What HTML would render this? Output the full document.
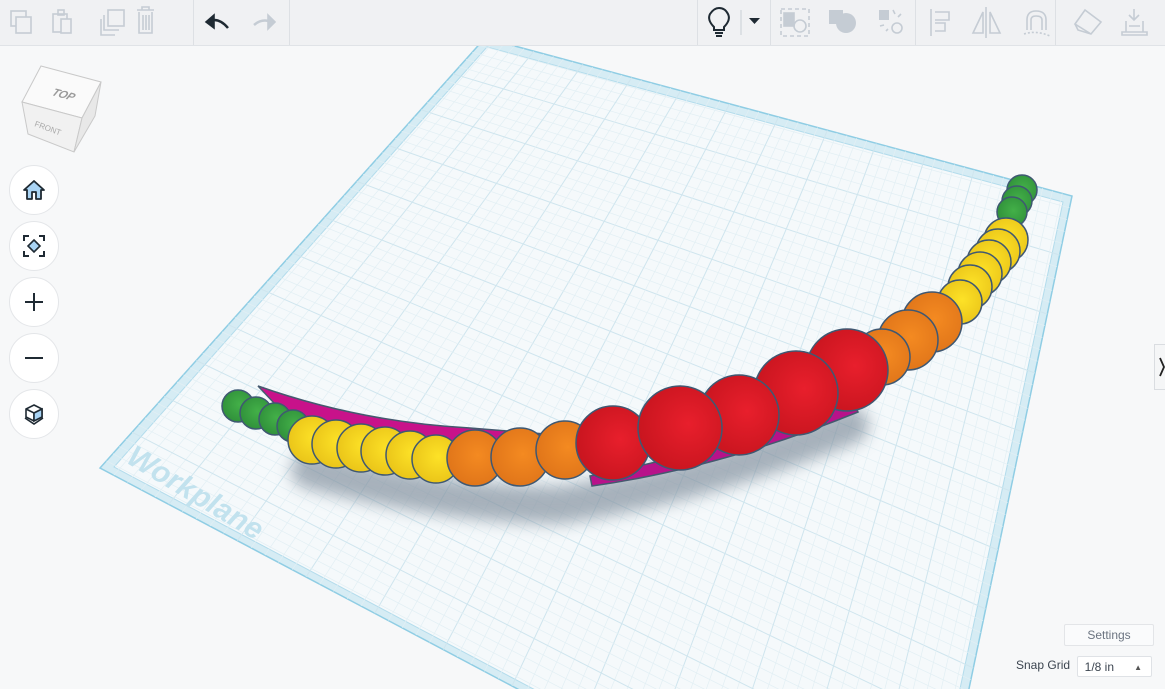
<!DOCTYPE html>
<html><head><meta charset="utf-8">
<style>
html,body{margin:0;padding:0;width:1165px;height:689px;overflow:hidden;background:#f7f8f9;font-family:"Liberation Sans",sans-serif;position:relative}
#tb{position:absolute;left:0;top:0;width:1165px;height:45px;background:#f0f1f3;border-bottom:1px solid #e0e3e7;z-index:5}
.sep{position:absolute;top:0;width:1px;height:45px;background:#dde0e4}
.vb{position:absolute;left:9px;width:48px;height:48px;border-radius:50%;background:#fff;border:1px solid #e4e6e9;z-index:4}
.vb svg{position:absolute;left:12px;top:12px}
#set{position:absolute;left:1064px;top:624px;width:88px;height:20px;border:1px solid #e3e5e8;background:#fafbfc;color:#6b7480;font-size:12px;text-align:center;line-height:20px;border-radius:2px}
#sg{position:absolute;left:1016px;top:658px;font-size:12px;color:#3c4550}
#sel{position:absolute;left:1077px;top:656px;width:75px;height:21px;border:1px solid #dfe2e6;background:#fff;font-size:12px;color:#3c4550;line-height:21px;border-radius:2px;box-sizing:border-box}
</style></head><body>
<svg id="scene" width="1165" height="689" style="position:absolute;left:0;top:0">
<defs>
<filter id="bl" x="-20%" y="-50%" width="140%" height="200%"><feGaussianBlur stdDeviation="8"/></filter>
<radialGradient id="gG" cx="55%" cy="45%" r="60%"><stop offset="0" stop-color="#43b048"/><stop offset="1" stop-color="#2f8f3a"/></radialGradient>
<radialGradient id="gY" cx="55%" cy="45%" r="60%"><stop offset="0" stop-color="#fde227"/><stop offset="1" stop-color="#e9c318"/></radialGradient>
<radialGradient id="gO" cx="55%" cy="45%" r="60%"><stop offset="0" stop-color="#f48a21"/><stop offset="1" stop-color="#df7419"/></radialGradient>
<radialGradient id="gR" cx="60%" cy="45%" r="60%"><stop offset="0" stop-color="#e81f2c"/><stop offset="1" stop-color="#c9151f"/></radialGradient>
<clipPath id="wp"><polygon points="485,38 1072,196 924,904 100,468"/></clipPath>
</defs>
<polygon points="485,38 1072,196 924,904 100,468" fill="#d6ecf4" stroke="#8fcde4" stroke-width="1.5"/>
<polygon points="487,47 1063,202 917,892 114,467" fill="#f5f9fb" stroke="#b3dcec" stroke-width="1"/>
<g id="grid" clip-path="url(#wp)"></g>
<text x="0" y="0" transform="translate(125,462) rotate(31)" font-size="30" font-weight="bold" font-style="italic" fill="#c2e2ee" font-family="Liberation Sans,sans-serif">Workplane</text>
<path d="M310,470 Q450,505 560,505 Q700,485 850,425" stroke="#8593a0" stroke-width="38" fill="none" opacity="0.7" filter="url(#bl)" stroke-linecap="round"/>
<path d="M258,386 Q360,422 470,428 L570,436 L570,455 Q400,452 290,420 Z" fill="#c8128a" stroke="#45596f" stroke-width="1.5"/>
<path d="M590,476 Q720,452 852,400 L858,412 Q720,468 592,486 Z" fill="#b8128a" stroke="#45596f" stroke-width="1.5"/>
<g id="beads" stroke="#3f5872" stroke-width="1.5"></g>
<g>
<polygon points="41,66 101,82 82,118 22,102" fill="#fafafa" stroke="#c9c9c9"/>
<polygon points="22,102 82,118 74,152 28,134" fill="#f1f1f1" stroke="#c9c9c9"/>
<polygon points="82,118 101,82 95,116 74,152" fill="#e8e8e8" stroke="#c9c9c9"/>
<text transform="translate(51,95) rotate(15) skewX(-15)" font-size="11" font-weight="bold" font-style="italic" fill="#9a9a9a">TOP</text>
<text transform="translate(34,126) rotate(20)" font-size="8" fill="#a8a8a8">FRONT</text>
</g>
<rect x="1154.5" y="344.5" width="12" height="45" fill="#f5f6f7" stroke="#dadde1"/>
<path d="M1160,358 L1164,367 L1160,376" stroke="#222" stroke-width="1.8" fill="none"/>
</svg>

<div id="tb">
<div class="sep" style="left:193px"></div><div class="sep" style="left:289px"></div>
<div class="sep" style="left:697px"></div><div class="sep" style="left:770px"></div>
<div class="sep" style="left:915px"></div><div class="sep" style="left:1055px"></div>
<svg width="1165" height="45" style="position:absolute;left:0;top:0" fill="none" stroke="#c5ccd4" stroke-width="1.6">
<rect x="11" y="11" width="15" height="15"/><rect x="16" y="17" width="15" height="16" fill="#f0f1f3"/>
<rect x="53" y="14" width="14" height="18"/><rect x="58" y="10" width="6" height="5"/><rect x="61" y="19" width="10" height="14" fill="#f0f1f3"/>
<rect x="108" y="10" width="16" height="16"/><path d="M104,15 V30 H119 M101,19 V35 H115"/>
<path d="M137,10 H154 M142,10 V7 H149 V10 M139,12 V33 H152 V12 M143,15 V30 M146,15 V30 M149,15 V30"/>
<path d="M207,22 Q218,16 228,28" stroke="#1f2a33" stroke-width="2.5"/><path d="M206,22 L214,15 L214,28 Z" fill="#1f2a33" stroke="#1f2a33"/>
<path d="M254,25 Q262,18 272,22" stroke-width="2.5"/><path d="M275,22 L268,15 L268,29 Z" fill="#c5ccd4"/>
<g stroke="#1f2a33" stroke-width="2"><path d="M714,27 Q707,20 710,14 Q714,8 719,8 Q725,8 728,14 Q731,20 724,27 V30 H714 Z"/><path d="M715,33 H723 M716,36 H722"/></g>
<path d="M741,10 V35" stroke="#c9ced4" stroke-width="1"/>
<path d="M749,18 H760 L754.5,24 Z" fill="#1f2a33" stroke="none"/>
<rect x="781" y="9" width="28" height="27" stroke-dasharray="4 3"/><rect x="784" y="13" width="10" height="13" fill="#c5ccd4"/><circle cx="800" cy="26" r="6"/>
<rect x="829" y="10" width="14" height="14" fill="#c5ccd4" stroke="none"/><circle cx="846" cy="23" r="10" fill="#c5ccd4" stroke="none"/>
<rect x="879" y="10" width="10" height="10" fill="#c5ccd4" stroke="none"/><circle cx="897" cy="28" r="5"/><path d="M893,10 L895,14 M901,14 L898,17 M880,26 L884,25 M886,31 L888,29"/>
<path d="M931,9 V36 M935,12 H949 V20 H935 M935,23 H945 V31 H935"/>
<path d="M986,7 V38 M983,12 L973,33 H983 Z M990,12 L1000,33 H990 Z"/>
<path d="M1024,34 Q1036,30 1050,36" stroke-dasharray="2 2"/><path d="M1027,30 V20 Q1027,11 1036,11 Q1046,11 1046,20 V30 M1031,30 V20 Q1031,16 1036,16 Q1042,16 1042,20 V30"/>
<path d="M1075,24 L1085,10 L1101,22 L1091,34 Z M1075,24 L1078,30 L1091,34"/>
<path d="M1134,9 V20 M1129,15 L1134,20 L1139,15 M1126,21 V32 H1143 V21 M1122,32 H1147 V35 H1122 Z M1129,26 H1140"/>
</svg>
</div>

<div class="vb" style="top:165px"><svg width="24" height="24"><path d="M2,12 L12,3 L22,12 H19 V21 H14 V14 H10 V21 H5 V12 Z" fill="#a9d4f5" stroke="#1f2a33" stroke-width="1.8" stroke-linejoin="round"/></svg></div>
<div class="vb" style="top:221px"><svg width="24" height="24" fill="none" stroke="#1f2a33" stroke-width="2"><path d="M2,7 V2 H7 M17,2 H22 V7 M22,17 V22 H17 M7,22 H2 V17"/><path d="M12,6 L18,12 L12,18 L6,12 Z" fill="#a9d4f5" stroke-width="1.6"/></svg></div>
<div class="vb" style="top:277px"><svg width="24" height="24" stroke="#1f2a33" stroke-width="2"><path d="M12,3 V21 M3,12 H21"/></svg></div>
<div class="vb" style="top:333px"><svg width="24" height="24" stroke="#1f2a33" stroke-width="2"><path d="M3,12 H21"/></svg></div>
<div class="vb" style="top:389px"><svg width="24" height="24" fill="none" stroke="#1f2a33" stroke-width="1.6"><path d="M12,3 L20,7 L20,15 L12,19 L4,15 L4,7 Z M4,7 L12,11 L20,7 M12,11 V19"/><path d="M12,11 L20,7 V15 L12,19 Z" fill="#a9d4f5"/><path d="M3,16 L12,22 L21,16"/></svg></div>

<div id="set">Settings</div>
<div id="sg">Snap Grid</div>
<div id="sel">&nbsp;&nbsp;1/8 in<span style="position:absolute;right:9px;top:0;font-size:8px;color:#555">▲</span></div>

<script>
(function(){
var A=[485,38],B=[1072,196],C=[924,904],D=[100,468];
function P(u,v){return [(1-u)*(1-v)*A[0]+u*(1-v)*B[0]+u*v*C[0]+(1-u)*v*D[0],(1-u)*(1-v)*A[1]+u*(1-v)*B[1]+u*v*C[1]+(1-u)*v*D[1]];}
var g=document.getElementById('grid'),s='';var N=60;
function ln(p,q,c,w){return '<line x1="'+p[0].toFixed(1)+'" y1="'+p[1].toFixed(1)+'" x2="'+q[0].toFixed(1)+'" y2="'+q[1].toFixed(1)+'" stroke="'+c+'" stroke-width="'+w+'"/>';}
for(var i=1;i<N;i++){var t=i/N;var maj=i%5==0;var c=maj?'#cfe5ee':'#e2eff4';var w=maj?1:0.7;
s+=ln(P(t,0),P(t,1),c,w);s+=ln(P(0,t),P(1,t),c,w);}
g.innerHTML=s;
var L=[[238,406,16,'G'],[256,413,16,'G'],[275,419,16,'G'],[293,426,16,'G'],
[312,440,24,'Y'],[336,444,24,'Y'],[361,448,24,'Y'],[385,451,24,'Y'],[410,455,24,'Y'],[436,459,24,'Y'],
[475,458,28,'O'],[520,457,29,'O'],[565,450,29,'O']];
var R=[[1022,190,15,'G'],[1017,201,15,'G'],[1012,212,15,'G'],
[1006,240,22,'Y'],[998,251,22,'Y'],[989,262,22,'Y'],[980,274,22,'Y'],[970,287,22,'Y'],[960,302,22,'Y'],
[932,322,30,'O'],[908,340,30,'O'],[882,357,28,'O'],
[847,370,41,'R'],[796,393,42,'R'],[739,415,40,'R']];
var M=[[613,443,37,'R'],[680,428,42,'R']];
var h='';function add(a){a.forEach(function(b){h+='<circle cx="'+b[0]+'" cy="'+b[1]+'" r="'+b[2]+'" fill="url(#g'+b[3]+')"/>';});}
add(L);add(R);add(M);
document.getElementById('beads').innerHTML=h;
})();
</script>
</body></html>
